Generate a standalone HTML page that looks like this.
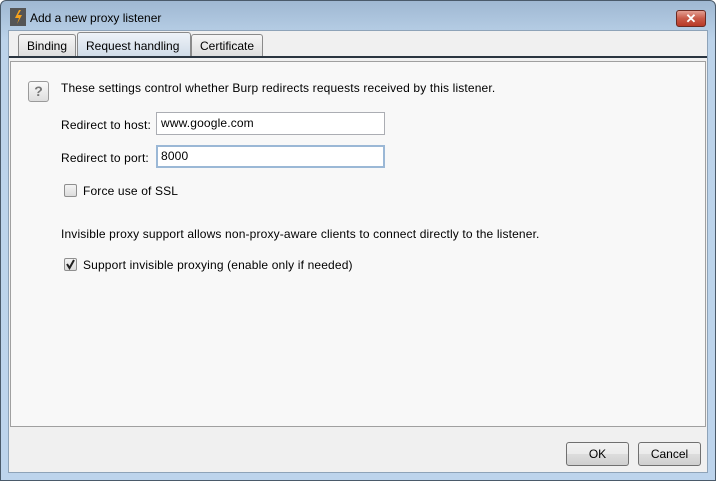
<!DOCTYPE html><html><head><style>
*{margin:0;padding:0;box-sizing:border-box}
body{width:716px;height:481px;overflow:hidden;font-family:"Liberation Sans",sans-serif;font-size:12px;color:#000;background:#fff;position:relative}
.frame{position:absolute;left:0;top:0;width:716px;height:481px;border:1px solid #4a5a6a;border-radius:6px 6px 0 0;background:linear-gradient(#9fb8d2,#bcd3ea 40px,#bdd4ec)}
.client{position:absolute;left:8px;top:30px;width:700px;height:443px;background:#f0f0f0;border:1px solid #8ea3b8}
.title{position:absolute;left:30px;top:11px;font-size:12px;color:#000}
.icon{position:absolute;left:10px;top:8px;width:16px;height:18px;background:#555}
.close{position:absolute;left:676px;top:10px;width:30px;height:17px;border:1px solid #6b2a22;border-radius:3px;background:linear-gradient(#e4a093,#c85a48 50%,#b83a28);color:#fff;font-weight:bold;text-align:center;font-size:13px;line-height:15px}
.tab{position:absolute;top:34px;height:23px;border:1px solid #8a8a8a;border-bottom:none;border-radius:3px 3px 0 0;background:linear-gradient(#f6f6f6,#dcdcdc);padding:4px 8px;font-size:12px}
.tab.sel{background:linear-gradient(#eef3f8,#cfdbe7);top:32px;height:25px;padding-top:6px}
.line{position:absolute;left:9px;top:56px;width:698px;height:2px;background:#2a3540}
.panel{position:absolute;left:10px;top:61px;width:696px;height:366px;border:1px solid #a0a0a0;background:#f8f8f8}
.t{position:absolute;white-space:nowrap;letter-spacing:0.15px}
.inp{position:absolute;height:23px;border:1px solid #abadb3;background:#fff;padding:3px 4px;font-size:12px;letter-spacing:0.15px}
.cb{position:absolute;width:13px;height:13px;border:1px solid #8f8f8f;border-radius:2px;background:linear-gradient(#f4f4f4,#dcdcdc)}
.btn{position:absolute;top:442px;height:24px;border:1px solid #707070;border-radius:3px;background:linear-gradient(#f2f2f2,#ebebeb 50%,#dddddd 51%,#cfcfcf);text-align:center;line-height:22px;font-size:12px}
</style></head><body>
<div class="frame"></div>
<div class="icon"><svg width="16" height="18"><path d="M9 2 L5 10 H9 L7 16 L12 7 H8 L11 2Z" fill="#f7a21b"/></svg></div>
<div class="title">Add a new proxy listener</div>
<div class="close">✕</div>
<div class="client"></div>
<div class="tab" style="left:18px;width:58px">Binding</div>
<div class="tab sel" style="left:77px;width:114px">Request handling</div>
<div class="tab" style="left:191px;width:72px">Certificate</div>
<div class="line"></div>
<div class="panel"></div>
<div style="position:absolute;left:28px;top:81px;width:21px;height:21px;border:1px solid #9a9a9a;border-radius:3px;background:linear-gradient(#fafafa,#dedede);color:#777;font-weight:bold;font-size:14px;text-align:center;line-height:19px">?</div>
<div class="t" style="left:61px;top:81px">These settings control whether Burp redirects requests received by this listener.</div>
<div class="t" style="left:61px;top:118px">Redirect to host:</div>
<div class="inp" style="left:156px;top:112px;width:229px">www.google.com</div>
<div class="t" style="left:61px;top:151px">Redirect to port:</div>
<div class="inp" style="left:156px;top:145px;width:229px;border:2px solid #9bb8d6;padding:2px 3px">8000</div>
<div class="cb" style="left:64px;top:184px"></div>
<div class="t" style="left:83px;top:184px">Force use of SSL</div>
<div class="t" style="left:61px;top:227px">Invisible proxy support allows non-proxy-aware clients to connect directly to the listener.</div>
<div class="cb" style="left:64px;top:258px"><svg width="11" height="11" style="position:absolute;left:0;top:0"><path d="M2 5 L4.5 9 L9 1" stroke="#222" stroke-width="2" fill="none"/></svg></div>
<div class="t" style="left:83px;top:258px">Support invisible proxying (enable only if needed)</div>
<div class="btn" style="left:566px;width:63px">OK</div>
<div class="btn" style="left:638px;width:63px">Cancel</div>
</body></html>
